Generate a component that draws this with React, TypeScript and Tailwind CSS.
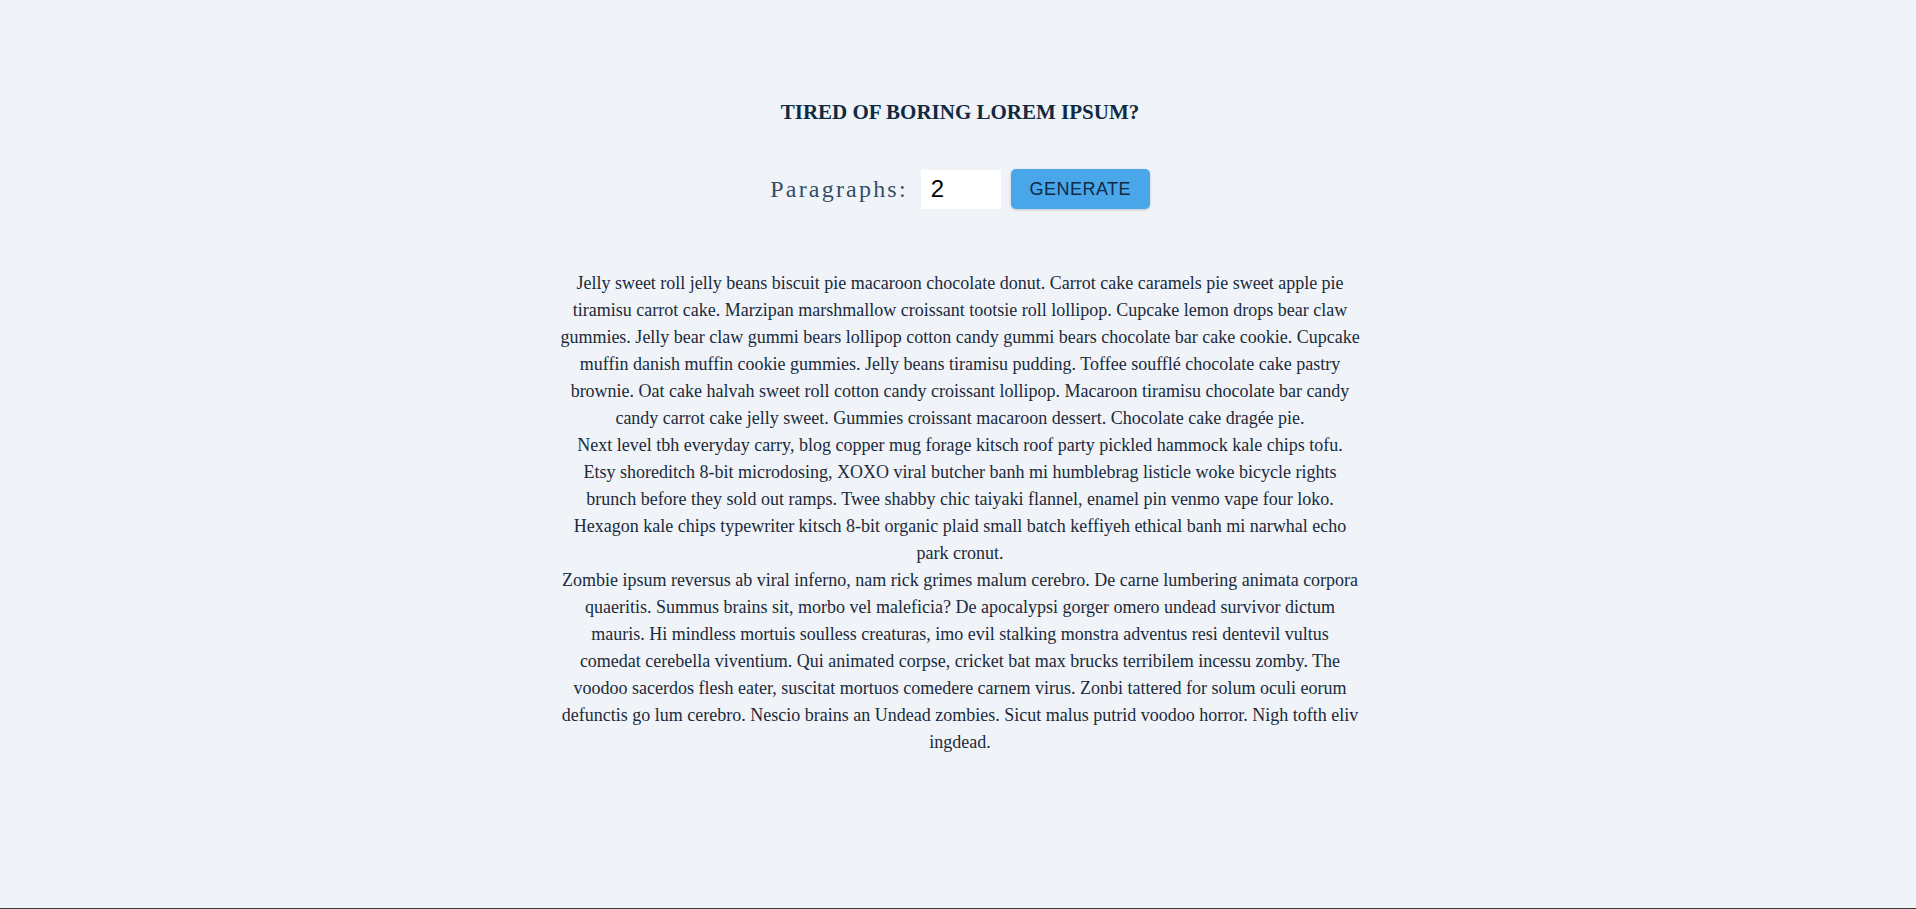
import React, { useState } from 'react';

const paragraphs = [
  'Jelly sweet roll jelly beans biscuit pie macaroon chocolate donut. Carrot cake caramels pie sweet apple pie tiramisu carrot cake. Marzipan marshmallow croissant tootsie roll lollipop. Cupcake lemon drops bear claw gummies. Jelly bear claw gummi bears lollipop cotton candy gummi bears chocolate bar cake cookie. Cupcake muffin danish muffin cookie gummies. Jelly beans tiramisu pudding. Toffee soufflé chocolate cake pastry brownie. Oat cake halvah sweet roll cotton candy croissant lollipop. Macaroon tiramisu chocolate bar candy candy carrot cake jelly sweet. Gummies croissant macaroon dessert. Chocolate cake dragée pie.',
  'Next level tbh everyday carry, blog copper mug forage kitsch roof party pickled hammock kale chips tofu. Etsy shoreditch 8-bit microdosing, XOXO viral butcher banh mi humblebrag listicle woke bicycle rights brunch before they sold out ramps. Twee shabby chic taiyaki flannel, enamel pin venmo vape four loko. Hexagon kale chips typewriter kitsch 8-bit organic plaid small batch keffiyeh ethical banh mi narwhal echo park cronut.',
  'Zombie ipsum reversus ab viral inferno, nam rick grimes malum cerebro. De carne lumbering animata corpora quaeritis. Summus brains sit, morbo vel maleficia? De apocalypsi gorger omero undead survivor dictum mauris. Hi mindless mortuis soulless creaturas, imo evil stalking monstra adventus resi dentevil vultus comedat cerebella viventium. Qui animated corpse, cricket bat max brucks terribilem incessu zomby. The voodoo sacerdos flesh eater, suscitat mortuos comedere carnem virus. Zonbi tattered for solum oculi eorum defunctis go lum cerebro. Nescio brains an Undead zombies. Sicut malus putrid voodoo horror. Nigh tofth eliv ingdead.',
];

export default function App() {
  const [count, setCount] = useState('2');

  return (
    <div className="min-h-screen bg-[#f0f4f8] flex flex-col font-['Liberation_Serif',serif]">
      <main className="flex-1 flex flex-col items-center pt-[100px] pl-[4px]">
        <h3 className="text-[21px] leading-[24px] font-bold uppercase text-[#102a43]">
          Tired of boring lorem ipsum?
        </h3>
        <form
          className="flex items-center mt-[45px]"
          onSubmit={(e) => e.preventDefault()}
        >
          <label htmlFor="amount" className="text-[24px] leading-[28px] tracking-[2.2px] text-[#334e68]">
            Paragraphs:
          </label>
          <input
            id="amount"
            type="text"
            value={count}
            onChange={(e) => setCount(e.target.value)}
            className="ml-[13px] w-[80px] h-[39px] px-[10px] bg-white text-black text-[24px] font-['Liberation_Sans',sans-serif] outline-none"
          />
          <button
            type="submit"
            className="ml-[10px] w-[139px] h-[40px] rounded-[5px] bg-[#49a6e9] text-[#102a43] text-[18px] tracking-[0.5px] font-['Liberation_Sans',sans-serif] shadow-[0_1px_3px_rgba(0,0,0,0.2)]"
          >
            GENERATE
          </button>
        </form>
        <article className="w-[800px] mt-[61px] text-center text-[18px] leading-[27px] text-[#1a2a3c]">
          {paragraphs.map((p, i) => (
            <p key={i}>{p}</p>
          ))}
        </article>
      </main>
      <div className="h-px bg-[#3a3a3a]" />
    </div>
  );
}
